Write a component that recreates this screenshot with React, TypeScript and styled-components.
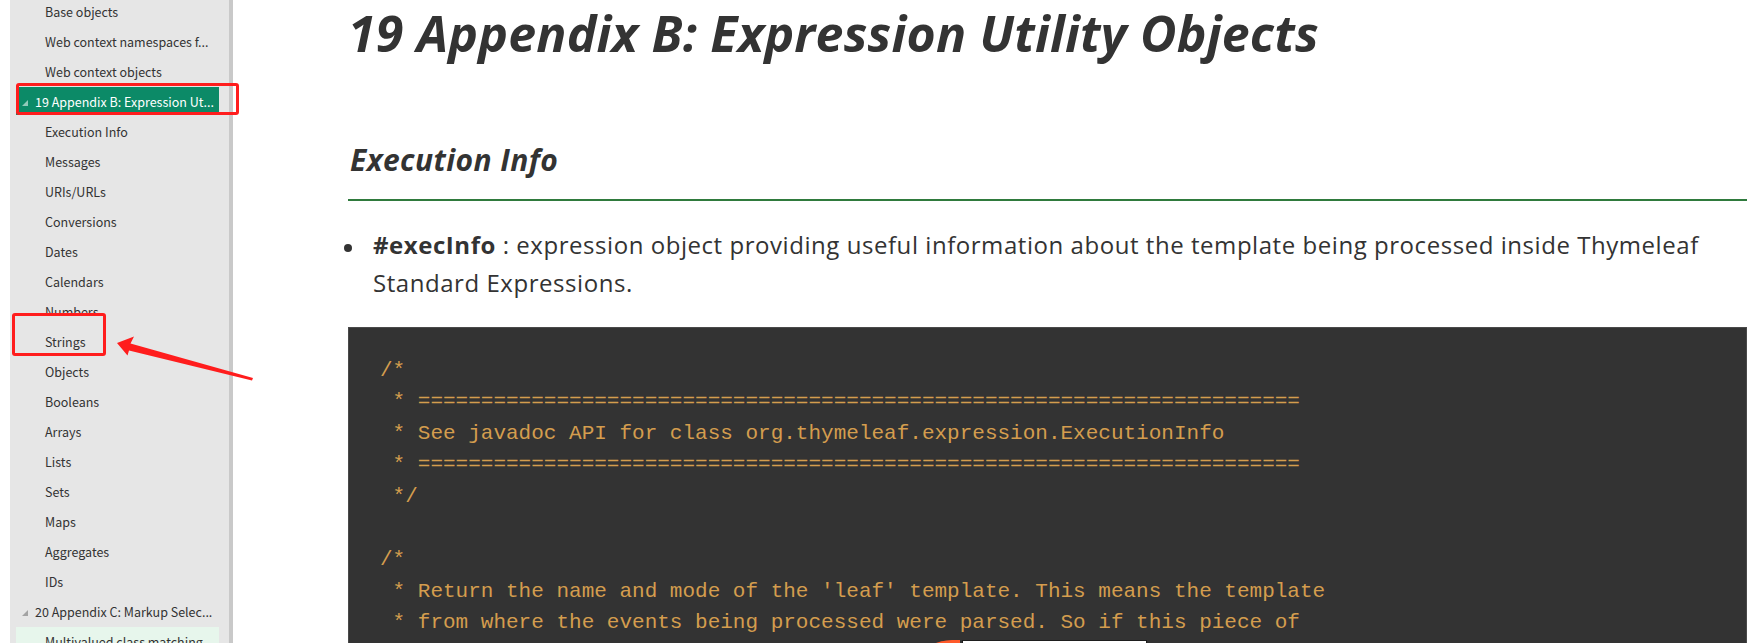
import React from "react";
import styled, { createGlobalStyle } from "styled-components";

const GlobalStyle = createGlobalStyle`
  html, body {
    margin: 0;
    padding: 0;
    background: #ffffff;
  }
  body {
    width: 1756px;
    height: 643px;
    overflow: hidden;
  }
  #root {
    height: 643px;
  }
`;

const Page = styled.div`
  position: relative;
  display: flex;
  height: 643px;
  overflow: hidden;
  background: #ffffff;
`;

const Sidebar = styled.nav`
  flex: none;
  width: 219px;
  margin-left: 10px;
  background: #e6e6e6;
  border-right: 4px solid #c9c9c9;
  overflow: hidden;
`;

const TocList = styled.ul`
  list-style: none;
  margin: -3px 0 0 0;
  padding: 0;
`;

type RowState = "active" | "hover" | undefined;

const TocRow = styled.li<{ $top?: boolean; $state?: RowState; $raised?: boolean }>`
  display: flex;
  align-items: center;
  gap: 7px;
  height: 28px;
  margin: 0 10px 2px 6px;
  padding-left: ${(p) => (p.$top ? 6 : 29)}px;
  font-family: "Noto Sans CJK SC", "Open Sans", sans-serif;
  font-size: 12.5px;
  white-space: nowrap;
  color: ${(p) => (p.$state === "active" ? "#ffffff" : "#333333")};
  background: ${(p) =>
    p.$state === "active" ? "#0c8a67" : p.$state === "hover" ? "#e7f6ec" : "transparent"};
  position: ${(p) => (p.$raised ? "relative" : "static")};
  z-index: ${(p) => (p.$raised ? 2 : "auto")};
`;

const Caret = styled.span<{ $light?: boolean }>`
  flex: none;
  width: 0;
  height: 0;
  margin-top: 4px;
  border-left: 6px solid transparent;
  border-bottom: 6px solid ${(p) => (p.$light ? "rgba(255,255,255,0.55)" : "#a3a3a3")};
`;

const Main = styled.main`
  flex: 1;
  min-width: 0;
  padding: 0 9px 0 115px;
  color: #333333;
`;

const Title = styled.h1`
  margin: 3px 0 0 0;
  font-family: "Open Sans", Lato, sans-serif;
  font-style: italic;
  font-weight: 700;
  font-size: 50px;
  letter-spacing: 0.2px;
  line-height: 60px;
  color: #333333;
  white-space: nowrap;
`;

const SectionTitle = styled.h2`
  margin: 79px 0 0 0;
  padding: 0 0 21px 2px;
  border-bottom: 2px solid #2f7a3d;
  font-family: "Open Sans", Lato, sans-serif;
  font-style: italic;
  font-weight: 700;
  font-size: 30px;
  letter-spacing: 0.4px;
  line-height: 36px;
  color: #333333;
`;

const Bullets = styled.ul`
  list-style: none;
  margin: 25px 0 0 0;
  padding: 0;
`;

const BulletRow = styled.li`
  display: flex;
  align-items: flex-start;
  gap: 21px;
  margin-left: -4px;
`;

const Dot = styled.span`
  flex: none;
  width: 8px;
  height: 8px;
  margin-top: 17.5px;
  border-radius: 50%;
  background: #333333;
`;

const BulletText = styled.p`
  margin: 0;
  font-family: "Open Sans", sans-serif;
  font-size: 24px;
  letter-spacing: 0.55px;
  line-height: 38px;
  color: #333333;

  strong {
    font-weight: 700;
  }
`;

const CodeBlock = styled.pre`
  margin: 25px 0 0 0;
  padding: 26.5px 20px 40px 31px;
  background: #333333;
  border: 1px solid #4a4a4a;
  font-family: "Liberation Mono", "DejaVu Sans Mono", monospace;
  font-size: 21px;
  line-height: 31.6px;
  color: #d49d4e;
  white-space: pre;
`;

const RedBox = styled.div<{ $x: number; $y: number; $w: number; $h: number; $fill?: string }>`
  position: absolute;
  left: ${(p) => p.$x}px;
  top: ${(p) => p.$y}px;
  width: ${(p) => p.$w}px;
  height: ${(p) => p.$h}px;
  box-sizing: border-box;
  border: 3px solid #ff1d1d;
  border-radius: 3px;
  background: ${(p) => p.$fill ?? "transparent"};
  z-index: 1;
  pointer-events: none;
`;

const ArrowLayer = styled.svg`
  position: absolute;
  left: 0;
  top: 0;
  width: 1756px;
  height: 643px;
  z-index: 3;
  pointer-events: none;
`;

const Callout = styled.div`
  position: absolute;
  left: 962px;
  top: 640px;
  width: 183px;
  height: 12px;
  background: #ffffff;
  border: 1px solid #1e1e1e;
  z-index: 3;
`;

type Toc = { label: string; top?: boolean; state?: RowState; raised?: boolean };

const toc: Toc[] = [
  { label: "Base objects" },
  { label: "Web context namespaces f..." },
  { label: "Web context objects" },
  { label: "19 Appendix B: Expression Ut...", top: true, state: "active" },
  { label: "Execution Info" },
  { label: "Messages" },
  { label: "URIs/URLs" },
  { label: "Conversions" },
  { label: "Dates" },
  { label: "Calendars" },
  { label: "Numbers" },
  { label: "Strings", raised: true },
  { label: "Objects" },
  { label: "Booleans" },
  { label: "Arrays" },
  { label: "Lists" },
  { label: "Sets" },
  { label: "Maps" },
  { label: "Aggregates" },
  { label: "IDs" },
  { label: "20 Appendix C: Markup Selec...", top: true },
  { label: "Multivalued class matching", state: "hover" },
];

const rule = "=".repeat(70);

const code = [
  "/*",
  ` * ${rule}`,
  " * See javadoc API for class org.thymeleaf.expression.ExecutionInfo",
  ` * ${rule}`,
  " */",
  "",
  "/*",
  " * Return the name and mode of the 'leaf' template. This means the template",
  " * from where the events being processed were parsed. So if this piece of",
].join("\n");

export default function App() {
  return (
    <>
      <GlobalStyle />
      <Page>
        <Sidebar>
          <TocList>
            {toc.map((t) => (
              <TocRow key={t.label} $top={t.top} $state={t.state} $raised={t.raised}>
                {t.top && <Caret $light={t.state === "active"} />}
                {t.label}
              </TocRow>
            ))}
          </TocList>
        </Sidebar>

        <Main>
          <Title>19 Appendix B: Expression Utility Objects</Title>
          <SectionTitle>Execution Info</SectionTitle>
          <Bullets>
            <BulletRow>
              <Dot />
              <BulletText>
                <strong>#execInfo</strong> : expression object providing useful information about the
                template being processed inside Thymeleaf Standard Expressions.
              </BulletText>
            </BulletRow>
          </Bullets>
          <CodeBlock>{code}</CodeBlock>
        </Main>

        <RedBox $x={16} $y={83} $w={223} $h={32} />
        <RedBox $x={12} $y={313} $w={94} $h={43} $fill="#e6e6e6" />

        <ArrowLayer viewBox="0 0 1756 643">
          <polygon
            points="117,343 134,336.5 130.5,343.5 253,378 252,380.5 129,350.5 127.5,355.5"
            fill="#ff1d1d"
          />
          <path d="M936,643 C940,641 948,639.5 960,640 L960,643 Z" fill="#ff5a2a" />
        </ArrowLayer>
        <Callout />
      </Page>
    </>
  );
}
